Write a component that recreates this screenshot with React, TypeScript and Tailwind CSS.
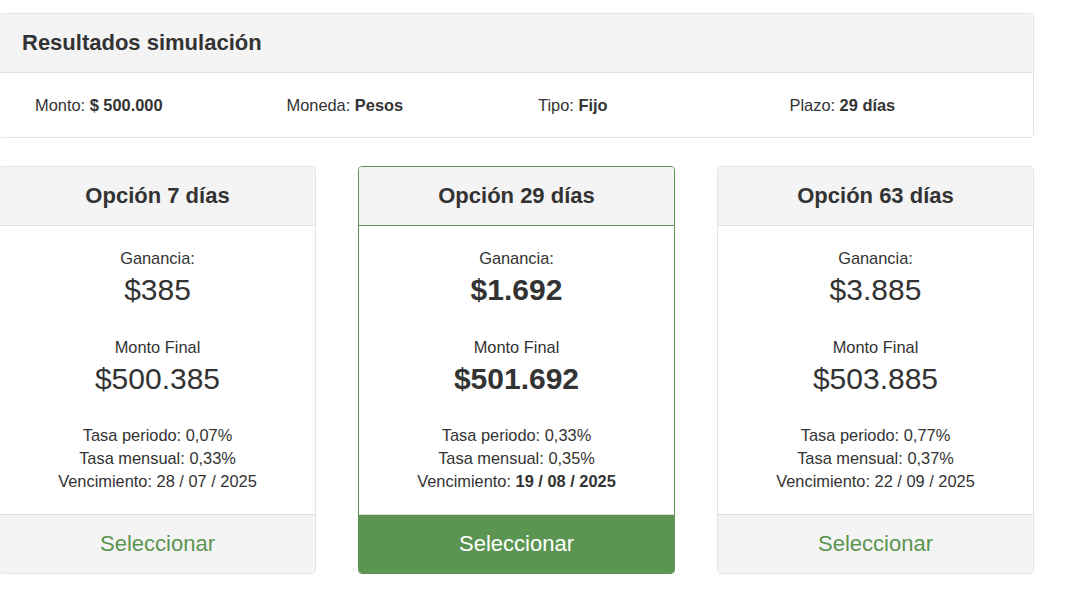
import React from "react";

type Opt = {
  title: string;
  ganancia: string;
  final: string;
  periodo: string;
  mensual: string;
  venc: string;
  selected?: boolean;
};

const opts: Opt[] = [
  { title: "Opción 7 días", ganancia: "$385", final: "$500.385", periodo: "0,07%", mensual: "0,33%", venc: "28 / 07 / 2025" },
  { title: "Opción 29 días", ganancia: "$1.692", final: "$501.692", periodo: "0,33%", mensual: "0,35%", venc: "19 / 08 / 2025", selected: true },
  { title: "Opción 63 días", ganancia: "$3.885", final: "$503.885", periodo: "0,77%", mensual: "0,37%", venc: "22 / 09 / 2025" },
];

function Card({ o }: { o: Opt }) {
  const sel = !!o.selected;
  return (
    <div
      className={`w-[317px] h-[408px] flex flex-col rounded-[4px] border overflow-hidden ${
        sel ? "border-[#5b9551]" : "border-[#e4e4e4]"
      }`}
    >
      <div
        className={`h-[59px] shrink-0 bg-[#f4f4f4] border-b flex items-center justify-center pb-[2px] text-[22px] font-bold ${
          sel ? "border-[#5b9551]" : "border-[#e2e2e2]"
        }`}
      >
        {o.title}
      </div>
      <div className="flex-1 flex flex-col items-center pt-[21px] bg-white">
        <div className="text-[16.4px] leading-[23px]">Ganancia:</div>
        <div className={`text-[30px] leading-[33px] mt-[3px] ${sel ? "font-bold" : ""}`}>{o.ganancia}</div>
        <div className="text-[16.4px] leading-[23px] mt-[30px]">Monto Final</div>
        <div className={`text-[30px] leading-[33px] mt-[3px] ${sel ? "font-bold" : ""}`}>{o.final}</div>
        <div className="text-[16.4px] leading-[23px] mt-[29px] text-center">
          <div>Tasa periodo: {o.periodo}</div>
          <div>Tasa mensual: {o.mensual}</div>
          <div>
            Vencimiento: {sel ? <b>{o.venc}</b> : o.venc}
          </div>
        </div>
      </div>
      <div
        className={`h-[59px] shrink-0 border-t border-[#dddddd] flex items-center justify-center pb-[2px] text-[22px] ${
          sel ? "bg-[#5b9551] text-white" : "bg-[#f4f4f4] text-[#5b9551]"
        }`}
      >
        Seleccionar
      </div>
    </div>
  );
}

export default function App() {
  return (
    <div
      className="w-[1076px] h-[594px] bg-white text-[#333333] pt-[13px] overflow-hidden"
      style={{ fontFamily: '"Liberation Sans", Arial, sans-serif' }}
    >
      <div className="w-[1035px] ml-[-1px]">
        <div className="rounded-[4px] border border-[#e4e4e4] overflow-hidden">
          <div className="h-[59px] bg-[#f4f4f4] border-b border-[#e2e2e2] flex items-center pl-[22px] pb-[2px] text-[22px] font-bold">
            Resultados simulación
          </div>
          <div className="h-[64px] flex items-center pl-[35px] text-[16.4px]">
            <div className="w-[251.5px] shrink-0">
              Monto: <b>$ 500.000</b>
            </div>
            <div className="w-[251.5px] shrink-0">
              Moneda: <b>Pesos</b>
            </div>
            <div className="w-[251.5px] shrink-0">
              Tipo: <b>Fijo</b>
            </div>
            <div className="w-[251.5px] shrink-0">
              Plazo: <b>29 días</b>
            </div>
          </div>
        </div>
        <div className="mt-[28px] flex justify-between">
          {opts.map((o) => (
            <Card key={o.title} o={o} />
          ))}
        </div>
      </div>
    </div>
  );
}
